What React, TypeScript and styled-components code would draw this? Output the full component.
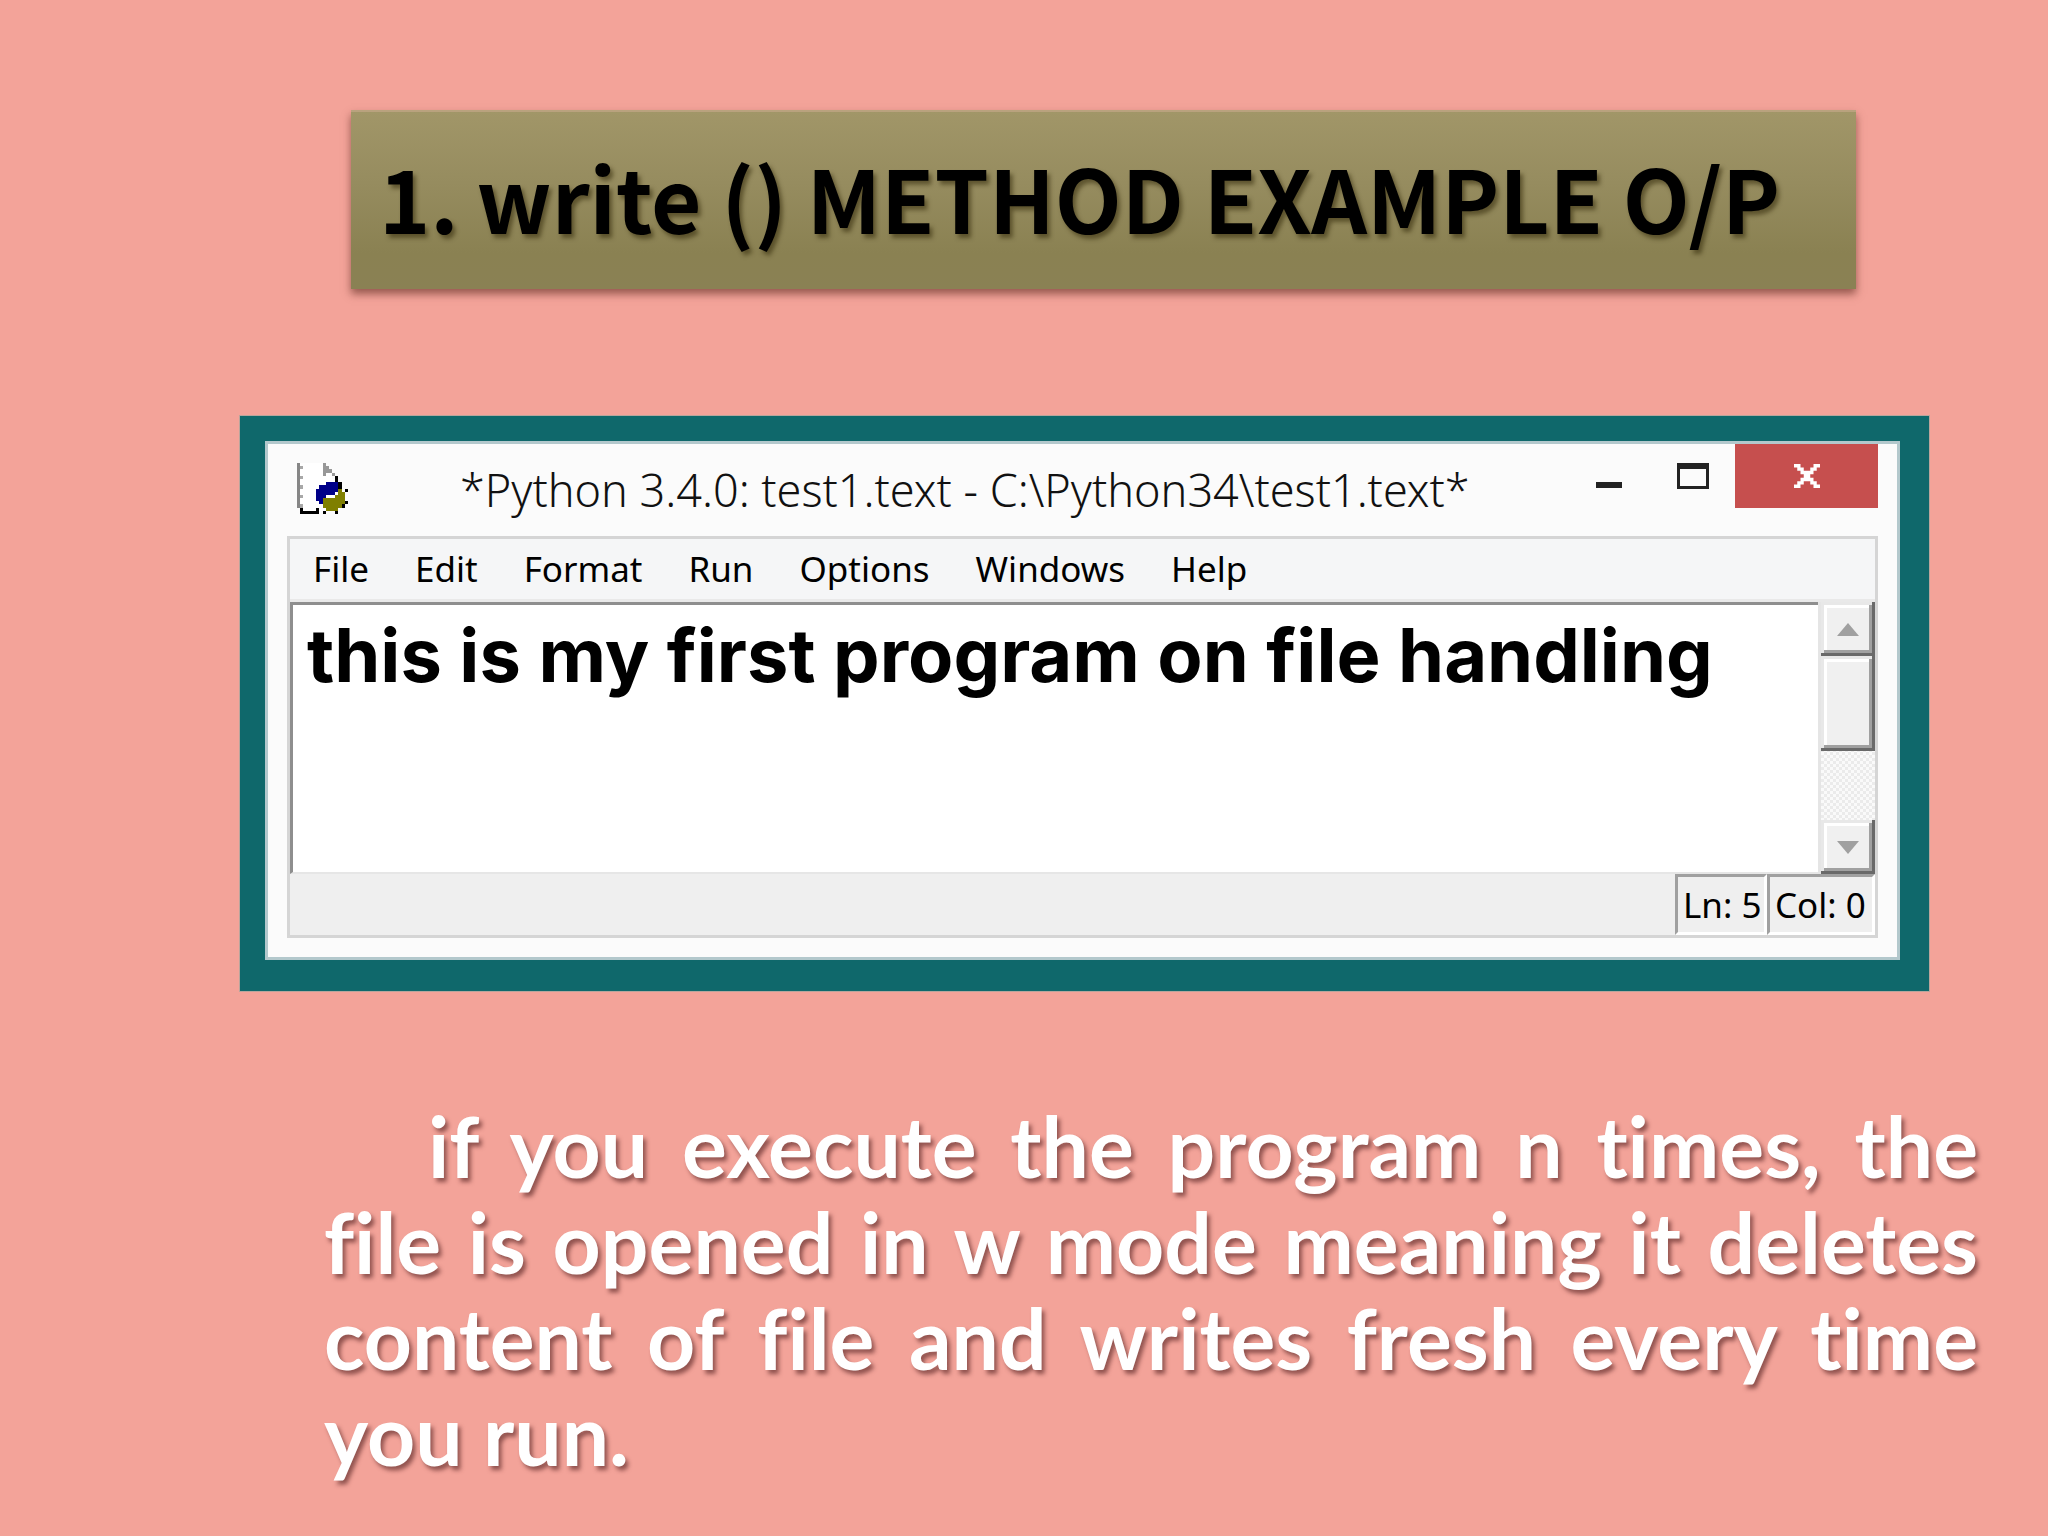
import React from 'react';
import styled, { createGlobalStyle } from 'styled-components';

const uiFont = '"Noto Sans", "Open Sans", sans-serif';
const slideFont = 'Lato, "Open Sans", sans-serif';
const headingFont = '"Noto Sans CJK SC", "Open Sans", sans-serif';
const editorFont = 'Inter, "Open Sans", sans-serif';

const GlobalStyle = createGlobalStyle`
  *, *::before, *::after { box-sizing: border-box; }
  body {
    margin: 0;
    background: #f3a399;
    font-family: ${slideFont};
    font-variant-ligatures: none;
  }
  button {
    border: 0;
    padding: 0;
    background: none;
    font: inherit;
    color: inherit;
  }
`;

const Slide = styled.main`
  display: flex;
  flex-direction: column;
  min-height: 100vh;
  padding: 110px 70px 50px 240px;
`;

const Banner = styled.h1`
  display: flex;
  align-items: center;
  gap: 18px;
  margin: 0 122px 0 111px;
  padding: 32px 28px 40px;
  border-top: 2px solid #b9a27e;
  background: linear-gradient(#a19668, #968c5f 40%, #8a8152 80%, #8a8154);
  box-shadow: 0 5px 8px rgba(90, 40, 30, 0.6);
  color: #000;
  font: 700 87px/105px ${headingFont};
  text-shadow: 3px 4px 4px rgba(50, 40, 10, 0.55);
`;

const Frame = styled.section`
  margin: 127px 49px 0 0;
  padding: 25px 29px 31px 25px;
  background: #0f686b;
  box-shadow: 0 0 0 1px #b9a59c;
`;

const AppWindow = styled.div`
  padding: 0 19px 19px;
  border: 3px solid #b3c8cc;
  background: #fbfbfb;
`;

const TitleBar = styled.header`
  display: flex;
  align-items: flex-start;
  height: 92px;
`;

const AppIcon = styled.svg`
  width: 51px;
  height: 51px;
  margin: 19px 0 0 10px;
`;

const WindowTitle = styled.h2`
  flex: 1;
  margin: 0;
  padding-left: 112px;
  color: #111;
  font: 300 45px/92px ${uiFont};
  white-space: nowrap;
`;

const WindowButton = styled.button<{ $close?: boolean }>`
  display: flex;
  align-items: center;
  justify-content: center;
  width: ${(p) => (p.$close ? 143 : 84)}px;
  height: 64px;
  background: ${(p) => (p.$close ? '#c64f4e' : 'transparent')};
`;

const Client = styled.div`
  border: 3px solid #d5d5d5;
  background: #efefef;
`;

const MenuBar = styled.nav`
  display: flex;
  border-bottom: 3px solid #e9e9e9;
  background: #f5f6f7;
`;

const MenuItem = styled.button`
  padding: 0 23px;
  color: #000;
  font: 400 35px/60px ${uiFont};
`;

const EditorRow = styled.div`
  display: flex;
  height: 272px;
`;

const Editor = styled.textarea`
  flex: 1;
  min-width: 0;
  padding: 0 14px;
  border: 0 solid #8e8e8e;
  border-width: 3px 0 2px 3px;
  border-bottom-color: #e6e6e6;
  outline: 0;
  resize: none;
  overflow: hidden;
  background: #fff;
  color: #000;
  font: 700 74px/100px ${editorFont};
  font-variant-ligatures: none;
`;

const ScrollBar = styled.div`
  display: flex;
  flex-direction: column;
  width: 57px;
  border-left: 3px solid #e5e5e5;
  background: repeating-conic-gradient(#ebebeb 0% 25%, #fafafa 0% 50%) 0 0 / 6px 6px;
`;

const ScrollPart = styled.button<{ $thumb?: boolean }>`
  display: flex;
  align-items: center;
  justify-content: center;
  height: ${(p) => (p.$thumb ? 95 : 54)}px;
  background: #f0f0f0;
  box-shadow:
    inset -3px -3px #696969,
    inset 3px 3px #e8e8e8,
    inset -6px -6px #a0a0a0,
    inset 6px 6px #fff;

  &:last-child { margin-top: auto; }
`;

const StatusBar = styled.footer`
  display: flex;
  justify-content: flex-end;
`;

const StatusCell = styled.span<{ $width: number }>`
  width: ${(p) => p.$width}px;
  padding-left: 5px;
  border: 3px solid #fff;
  border-top-color: #a0a0a0;
  border-left-color: #a0a0a0;
  color: #000;
  font: 400 35px/55px ${uiFont};
  white-space: nowrap;
`;

const Note = styled.p`
  margin: 107px 0 0;
  padding-left: 84px;
  color: #fff;
  font-size: 84px;
  font-weight: 700;
  line-height: 96px;
  text-align: justify;
  text-indent: 104px;
  text-shadow: 3px 4px 4px rgba(80, 30, 30, 0.6);
`;

const menus = ['File', 'Edit', 'Format', 'Run', 'Options', 'Windows', 'Help'];

const FileIcon = () => (
  <AppIcon viewBox="0 0 16 16" shapeRendering="crispEdges" aria-hidden="true">
    <path d="M1 0h7v3h3v2h2v8h-4v2h-8z" fill="#fff" />
    <path d="M0 0h1v14h-1z" fill="#868686" />
    <path d="M1 1h1v1h-1z M1 4h1v1h-1z M1 7h1v1h-1z M1 10h1v1h-1z M1 13h1v1h-1z" fill="#a8a8a8" />
    <path d="M8 0h1v1h1v1h1v1h1v1h-1v-1h-2v1h-1z" fill="#989898" />
    <path d="M1 14h1v1h4v-1h1v2h-6z M12 4h1v2h1v2h-1v-2h-1z M15 8h1v1h-1z M15 12h1v1h-1z M14 13h1v1h-1z M12 15h1v1h-1z M8 15h1v1h-1z" fill="#000" />
    <path d="M9 6h4v3h-1v1h-3v1h-1v2h-1v-1h-1v-4h1v-1h2z" fill="#000088" />
    <path d="M13 8h1v1h1v4h-1v1h-1v1h-4v-1h-1v-3h4v-1h1z" fill="#7f7f00" />
  </AppIcon>
);

const Arrow = ({ down = false }: { down?: boolean }) => (
  <svg width="22" height="13" aria-hidden="true">
    <path d={down ? 'M0 0h22l-11 13z' : 'M0 13h22l-11 -13z'} fill="#a0a0a0" />
  </svg>
);

export default function App() {
  return (
    <>
      <GlobalStyle />
      <Slide>
        <Banner>
          <span>1.</span>
          <span>write () METHOD EXAMPLE O/P</span>
        </Banner>

        <Frame>
          <AppWindow>
            <TitleBar>
              <FileIcon />
              <WindowTitle>{'*Python 3.4.0: test1.text - C:\\Python34\\test1.text*'}</WindowTitle>
              <WindowButton type="button" aria-label="Minimize">
                <svg width="26" height="26" aria-hidden="true">
                  <path d="M0 19h26v6h-26z" fill="#222" />
                </svg>
              </WindowButton>
              <WindowButton type="button" aria-label="Maximize">
                <svg width="32" height="26" aria-hidden="true">
                  <path d="M0 0h32v26h-32z M3 6v17h26v-17z" fill="#222" fillRule="evenodd" />
                </svg>
              </WindowButton>
              <WindowButton type="button" aria-label="Close" $close>
                <svg width="26" height="24" viewBox="0 0 8 7" preserveAspectRatio="none" aria-hidden="true">
                  <path
                    d="M0 0h2v1h1v1h2v-1h1v-1h2v1h-1v1h-1v1h-1v1h1v1h1v1h1v1h-2v-1h-1v-1h-2v1h-1v1h-2v-1h1v-1h1v-1h1v-1h-1v-1h-1v-1h-1z"
                    fill="#fff"
                  />
                </svg>
              </WindowButton>
            </TitleBar>

            <Client>
              <MenuBar>
                {menus.map((name) => (
                  <MenuItem key={name} type="button">{name}</MenuItem>
                ))}
              </MenuBar>
              <EditorRow>
                <Editor
                  aria-label="Editor"
                  spellCheck={false}
                  defaultValue="this is my first program on file handling"
                />
                <ScrollBar>
                  <ScrollPart type="button" aria-label="Scroll up"><Arrow /></ScrollPart>
                  <ScrollPart type="button" aria-label="Scroll position" $thumb />
                  <ScrollPart type="button" aria-label="Scroll down"><Arrow down /></ScrollPart>
                </ScrollBar>
              </EditorRow>
              <StatusBar>
                <StatusCell $width={92}>Ln: 5</StatusCell>
                <StatusCell $width={108}>Col: 0</StatusCell>
              </StatusBar>
            </Client>
          </AppWindow>
        </Frame>

        <Note>
          if you execute the program n times, the file is opened in w mode meaning it deletes
          content of file and writes fresh every time you run.
        </Note>
      </Slide>
    </>
  );
}
